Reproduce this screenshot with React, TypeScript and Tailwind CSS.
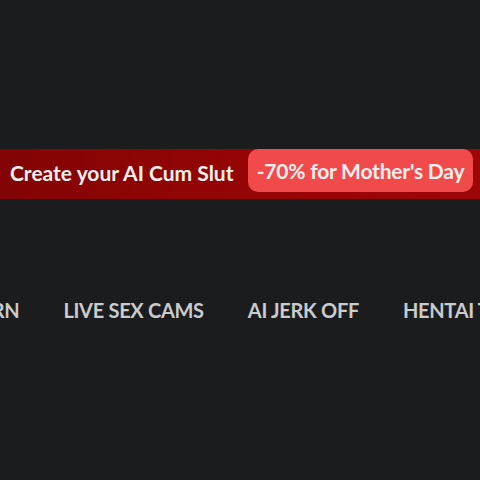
const navItems = ['AI PORN', 'LIVE SEX CAMS', 'AI JERK OFF', 'HENTAI TV'];

export default function App() {
  return (
    <div className="w-[480px] h-[480px] bg-[#1b1c1e] overflow-hidden font-['Lato','Liberation_Sans',sans-serif]">
      <div className="h-[149px]" />
      <div className="h-[50px] bg-gradient-to-r from-[#820404] via-[#950505] to-[#9c0707] flex items-start pl-[10px]">
        <span className="mt-[8px] text-[#f4f0ee] font-bold text-[21px] tracking-[0em] whitespace-nowrap">
          Create your AI Cum Slut
        </span>
        <span className="ml-auto mr-[7px] h-[43px] w-[225px] rounded-[10px] bg-[#f04a4a] flex items-center justify-center text-[#f8efee] font-bold text-[21px] tracking-[-0.01em] whitespace-nowrap">
          -70% for Mother's Day
        </span>
      </div>
      <div className="h-[96px]" />
      <nav className="flex overflow-hidden whitespace-nowrap gap-[44px] -ml-[60px]">
        {navItems.map(item => (
          <span key={item} className="text-[#c9cbcd] font-bold text-[20px] tracking-[-0.015em] shrink-0">
            {item}
          </span>
        ))}
      </nav>
    </div>
  );
}
